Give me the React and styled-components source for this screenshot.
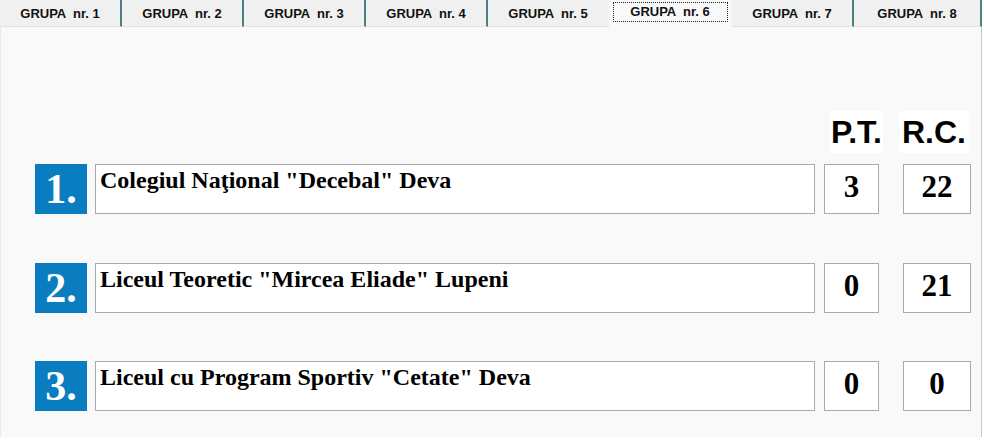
import styled, { createGlobalStyle } from "styled-components";

const GlobalStyle = createGlobalStyle`
  html, body {
    margin: 0;
    padding: 0;
    background: #ffffff;
  }
`

const Wrapper = styled.div`
  width: 982px;
  display: flex;
  flex-direction: column;
`

const TabBar = styled.div`
  display: flex;
  height: 27px;
`

const Tab = styled.div`
  box-sizing: border-box;
  width: 122px;
  flex: ${({ $last }) => ($last ? "1" : "none")};
  height: 27px;
  position: relative;
  background: ${({ $active }) => ($active ? "#f9f9f9" : "#f0f0f0")};
  border-bottom: 1px solid ${({ $active }) => ($active ? "#f9f9f9" : "#e2e2e2")};
  border-right: 2px solid ${({ $divider }) => ($divider ? "#4b7f80" : "#f5f5f5")};
  font-family: "Liberation Sans", Arial, sans-serif;
  font-weight: bold;
  font-size: 13px;
  color: #111;
  white-space: pre;
  display: flex;
  justify-content: center;
  align-items: ${({ $active }) => ($active ? "flex-start" : "center")};
  padding-top: ${({ $active }) => ($active ? "4px" : "1px")};
`

const Focus = styled.div`
  position: absolute;
  left: 3px;
  right: 2px;
  top: 2px;
  height: 20px;
  border: 1px dotted #222;
  box-sizing: border-box;
`

const Panel = styled.div`
  box-sizing: border-box;
  height: 410px;
  background: #f9f9f9;
  border-left: 1px solid #e8e8e8;
  border-right: 1px solid #c9c9c9;
  padding: 84px 0 0 34px;
  display: flex;
  flex-direction: column;
`

const Header = styled.div`
  display: flex;
  justify-content: flex-end;
  gap: 16px;
  padding-right: 12px;
  margin-bottom: 11px;
`

const HeadLabel = styled.span`
  background: #ffffff;
  height: 42px;
  line-height: 42px;
  padding: 0 ${({ $pad }) => $pad}px;
  font-family: "Liberation Sans", Arial, sans-serif;
  font-weight: bold;
  font-size: 32px;
  color: #000;
`

const Rows = styled.div`
  display: flex;
  flex-direction: column;
  gap: 48.5px;
`

const Row = styled.div`
  display: flex;
  height: 50px;
`

const Rank = styled.div`
  width: 52px;
  height: 50px;
  margin-right: 8px;
  background: #0a7dc1;
  color: #ffffff;
  font-family: "Liberation Serif", "Times New Roman", serif;
  font-weight: bold;
  font-size: 42px;
  line-height: 50px;
  text-align: center;
`

const Name = styled.div`
  box-sizing: border-box;
  width: 720px;
  height: 50px;
  margin-right: 9px;
  background: #ffffff;
  border: 1px solid #a9a9a9;
  padding: 1px 4px 0;
  font-family: "Liberation Serif", "Times New Roman", serif;
  font-weight: bold;
  font-size: 24px;
  line-height: 28px;
  color: #000;
`

const Score = styled.div`
  box-sizing: border-box;
  width: ${({ $w }) => $w}px;
  height: 50px;
  margin-right: ${({ $mr }) => $mr || 0}px;
  background: #ffffff;
  border: 1px solid #a9a9a9;
  text-align: center;
  font-family: "Liberation Serif", "Times New Roman", serif;
  font-weight: bold;
  font-size: 31px;
  line-height: 44px;
  color: #000;
`

const tabs = [1, 2, 3, 4, 5, 6, 7, 8]
const activeTab = 6

const teams = [
  { rank: "1.", name: 'Colegiul Naţional "Decebal" Deva', pt: 3, rc: 22 },
  { rank: "2.", name: 'Liceul Teoretic "Mircea Eliade" Lupeni', pt: 0, rc: 21 },
  { rank: "3.", name: 'Liceul cu Program Sportiv "Cetate" Deva', pt: 0, rc: 0 },
]

function App() {
  return (
    <Wrapper>
      <GlobalStyle />
      <TabBar>
        {tabs.map((n) => (
          <Tab
            key={n}
            $active={n === activeTab}
            $divider={n !== activeTab && n !== activeTab - 1}
            $last={n === tabs.length}
          >
            {`GRUPA  nr. ${n}`}
            {n === activeTab && <Focus />}
          </Tab>
        ))}
      </TabBar>
      <Panel>
        <Header>
          <HeadLabel $pad={1}>P.T.</HeadLabel>
          <HeadLabel $pad={3}>R.C.</HeadLabel>
        </Header>
        <Rows>
          {teams.map((t) => (
            <Row key={t.rank}>
              <Rank>{t.rank}</Rank>
              <Name>{t.name}</Name>
              <Score $w={55} $mr={24}>{t.pt}</Score>
              <Score $w={68}>{t.rc}</Score>
            </Row>
          ))}
        </Rows>
      </Panel>
    </Wrapper>
  )
}

export default App
